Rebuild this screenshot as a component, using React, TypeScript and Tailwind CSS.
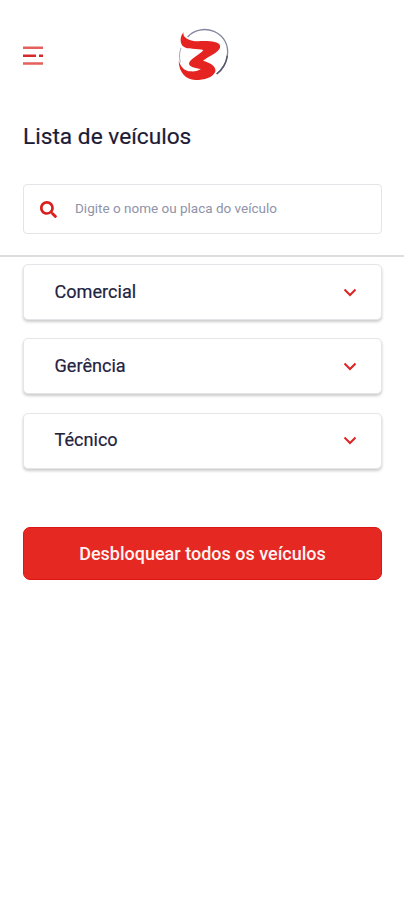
import React, { useState } from "react";
import { FaSearch } from "react-icons/fa";

const groups = ["Comercial", "Gerência", "Técnico"];

function Logo() {
  return (
    <svg width="75" height="70" viewBox="0 0 225 210" fill="none">
      <path d="M68 51C86 29 119 23 147 34C177 47 192 76 187 107C184 130 172 149 155 162" stroke="#8487a0" strokeWidth="4" />
      <path d="M187 107C184 130 172 149 155 162" stroke="#55576a" strokeWidth="4.5" />
      <path d="M48 84C43 97 42 112 46 127" stroke="#a5a7b6" strokeWidth="3" />
      <path
        d="M56 37C53 48 60 54 74 60C92 67 113 61 135 64C156 66 168 71 165 83C160 98 130 109 114 122C133 127 155 138 151 155C143 172 119 180 91 180C63 178 42 159 41 122C48 142 59 153 77 154C91 155 102 151 108 147C91 144 72 140 72 131C72 117 107 103 115 90C97 84 67 91 53 78C44 68 45 47 56 37Z"
        fill="#e52421"
      />
    </svg>
  );
}

function MenuIcon() {
  return (
    <svg width="20" height="20" viewBox="0 0 20 20" fill="none" strokeWidth="2.4">
      <path d="M0 1.7H20M0 17.5H20" stroke="#e4605d" />
      <path d="M0 9.8H13M16 9.8H20" stroke="#d42a2c" />
    </svg>
  );
}

function GroupCard({ name }: { name: string }) {
  const [open, setOpen] = useState(false);

  return (
    <button
      onClick={() => setOpen(!open)}
      className="flex h-[56px] w-full items-center justify-between rounded-[5px] border border-[#e4e5e8] bg-white pr-[25px] pl-[30.5px] shadow-[0_2px_3px_rgba(0,0,0,0.2)]"
    >
      <span className="-mt-px text-[18.1px] leading-6 text-[#23233f] [-webkit-text-stroke:0.2px_#23233f]">{name}</span>
      <svg width="13" height="9" viewBox="0 0 13 9" fill="none" className={open ? "rotate-180" : ""}>
        <path d="M1.5 1.5L7 7L12.5 1.5" stroke="#dc2626" strokeWidth="2" />
      </svg>
    </button>
  );
}

export default function App() {
  return (
    <div className="min-h-[900px] w-[404px] bg-white font-[Roboto,sans-serif]">
      <header className="grid h-[90px] grid-cols-[142px_75px] items-start pt-5 pl-[23px]">
        <button className="mt-[26px] w-5">
          <MenuIcon />
        </button>
        <Logo />
      </header>

      <section className="border-b-2 border-[#dddddf] px-[23px] pt-[33px] pb-[21px]">
        <h1 className="text-[22.7px] leading-7 text-[#1c1b36] [-webkit-text-stroke:0.2px_#1c1b36]">Lista de veículos</h1>
        {/* busca */}
        <label className="mt-[33px] flex h-[50px] w-[359px] items-center gap-[18px] rounded-[4px] border border-[#e3e4e8] pl-4">
          <FaSearch className="h-[17px] w-[17px] text-[#d9201f]" />
          <input
            className="-mt-0.5 w-[270px] text-[13.5px] text-[#23233f] outline-none placeholder:text-[#8f93a8]"
            placeholder="Digite o nome ou placa do veículo"
          />
        </label>
      </section>

      <main className="w-[382px] pt-[7px] pl-[23px]">
        <div className="flex flex-col gap-[18.3px]">
          {groups.map((name) => (
            <GroupCard key={name} name={name} />
          ))}
        </div>
        <button className="mt-[58.6px] h-[53px] w-full rounded-[7px] border border-[#dc1515] bg-[#e52822] text-[18px] font-medium text-[#fff3f2]">
          Desbloquear todos os veículos
        </button>
      </main>
    </div>
  );
}
